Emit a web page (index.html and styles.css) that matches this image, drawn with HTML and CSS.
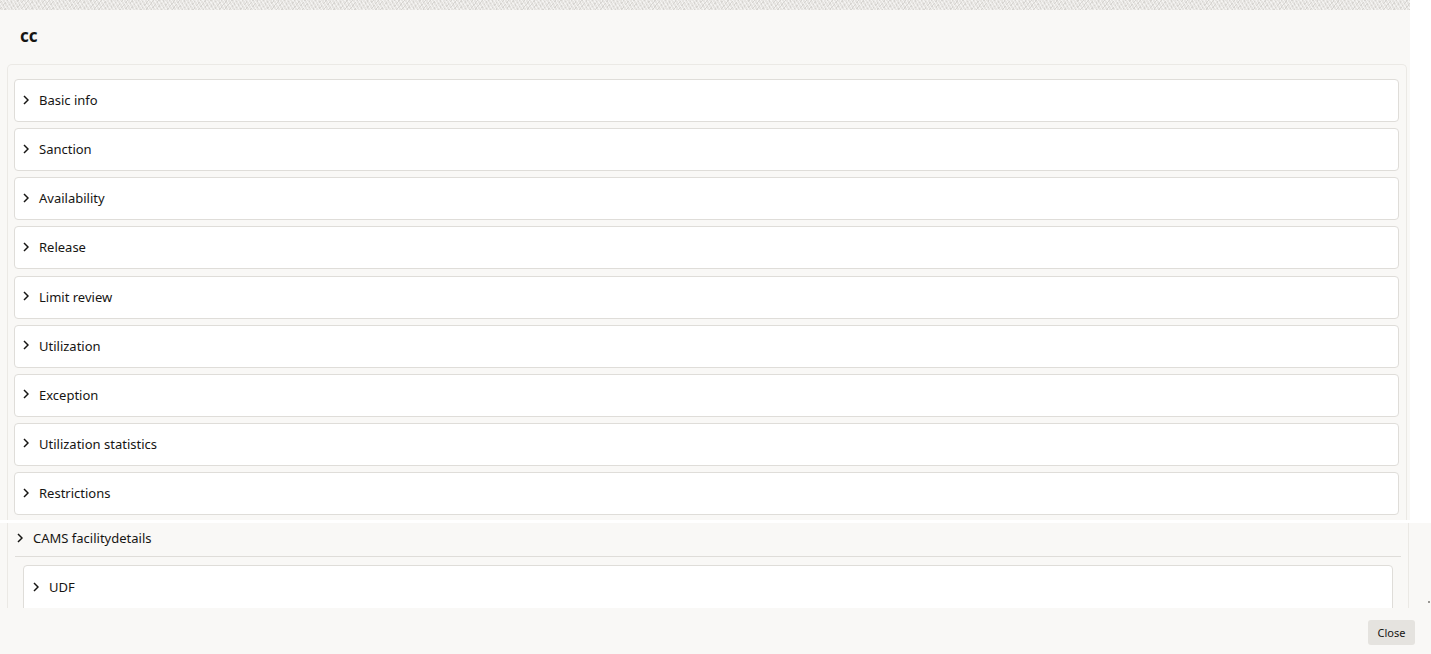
FILE: index.html
```html
<!DOCTYPE html>
<html lang="en">
<head>
<meta charset="utf-8">
<title>cc</title>
<link rel="stylesheet" href="styles.css">
</head>
<body>
<div class="topstrip"></div>
<div class="dialog">
  <div class="dialog-header"><h1 class="title">cc</h1></div>
  <div class="panel">
    <div class="card"><span class="chev"><svg viewBox="0 0 6 10" width="6" height="10"><path d="M1 1l4 4-4 4" fill="none" stroke="#161513" stroke-width="1.5"/></svg></span><span class="label">Basic info</span></div>
    <div class="card"><span class="chev"><svg viewBox="0 0 6 10" width="6" height="10"><path d="M1 1l4 4-4 4" fill="none" stroke="#161513" stroke-width="1.5"/></svg></span><span class="label">Sanction</span></div>
    <div class="card"><span class="chev"><svg viewBox="0 0 6 10" width="6" height="10"><path d="M1 1l4 4-4 4" fill="none" stroke="#161513" stroke-width="1.5"/></svg></span><span class="label">Availability</span></div>
    <div class="card"><span class="chev"><svg viewBox="0 0 6 10" width="6" height="10"><path d="M1 1l4 4-4 4" fill="none" stroke="#161513" stroke-width="1.5"/></svg></span><span class="label">Release</span></div>
    <div class="card"><span class="chev"><svg viewBox="0 0 6 10" width="6" height="10"><path d="M1 1l4 4-4 4" fill="none" stroke="#161513" stroke-width="1.5"/></svg></span><span class="label">Limit review</span></div>
    <div class="card"><span class="chev"><svg viewBox="0 0 6 10" width="6" height="10"><path d="M1 1l4 4-4 4" fill="none" stroke="#161513" stroke-width="1.5"/></svg></span><span class="label">Utilization</span></div>
    <div class="card"><span class="chev"><svg viewBox="0 0 6 10" width="6" height="10"><path d="M1 1l4 4-4 4" fill="none" stroke="#161513" stroke-width="1.5"/></svg></span><span class="label">Exception</span></div>
    <div class="card"><span class="chev"><svg viewBox="0 0 6 10" width="6" height="10"><path d="M1 1l4 4-4 4" fill="none" stroke="#161513" stroke-width="1.5"/></svg></span><span class="label">Utilization statistics</span></div>
    <div class="card"><span class="chev"><svg viewBox="0 0 6 10" width="6" height="10"><path d="M1 1l4 4-4 4" fill="none" stroke="#161513" stroke-width="1.5"/></svg></span><span class="label">Restrictions</span></div>
  </div>
</div>
<div class="gap"></div>
<div class="cams">
  <div class="cams-inner">
    <div class="cams-head"><span class="chev"><svg viewBox="0 0 6 10" width="6" height="10"><path d="M1 1l4 4-4 4" fill="none" stroke="#161513" stroke-width="1.5"/></svg></span><span class="label">CAMS facilitydetails</span></div>
    <div class="cams-body">
      <div class="card udf"><span class="chev"><svg viewBox="0 0 6 10" width="6" height="10"><path d="M1 1l4 4-4 4" fill="none" stroke="#161513" stroke-width="1.5"/></svg></span><span class="label">UDF</span></div>
    </div>
  </div>
  <span class="tick"></span>
</div>
<div class="footer"><button class="close-btn">Close</button></div>
</body>
</html>
```

FILE: styles.css
```css
html, body {
  margin: 0;
  padding: 0;
  background: #ffffff;
  font-family: "Noto Sans", "Liberation Sans", sans-serif;
  color: #161513;
  height: 654px;
  overflow: hidden;
}

.topstrip {
  width: 1410px;
  height: 10px;
  background-color: #e6e4e1;
  background-image:
    repeating-linear-gradient(60deg, rgba(255,255,255,0.55) 0 1px, transparent 1px 3px),
    repeating-linear-gradient(-50deg, rgba(200,198,194,0.5) 0 1px, transparent 1px 4px);
}

.dialog {
  width: 1410px;
  background: #f9f8f6;
  height: 510px;
  overflow: hidden;
}

.dialog-header {
  height: 54px;
  display: flex;
  align-items: center;
  padding-left: 20px;
}

.title {
  margin: 0;
  font-size: 17px;
  font-weight: 700;
  line-height: 1;
  position: relative;
  top: -2px;
}

.panel {
  margin-left: 7px;
  width: 1400px;
  box-sizing: border-box;
  border: 1px solid #ebe9e5;
  border-bottom: none;
  border-radius: 5px 5px 0 0;
  padding: 14px 7px 0 6px;
  display: flex;
  flex-direction: column;
  gap: 6.14px;
  height: 460px;
}

.card {
  height: 43px;
  box-sizing: border-box;
  background: #ffffff;
  border: 1px solid #dfddd9;
  border-radius: 4px;
  display: flex;
  align-items: center;
  padding-left: 8px;
  flex-shrink: 0;
}

.chev {
  width: 6px;
  height: 10px;
  display: flex;
  margin-right: 10px;
  position: relative;
  top: -1px;
}

.label {
  font-size: 13px;
  line-height: 1;
}

.gap {
  height: 3px;
  background: #ffffff;
}

.cams {
  height: 85px;
  background: #f9f8f6;
  position: relative;
}

.cams-inner {
  margin-left: 7px;
  width: 1402px;
  height: 85px;
  box-sizing: border-box;
  border-left: 1px solid #ebe9e5;
  border-right: 1px solid #ebe9e5;
  padding: 0 7px 0 7px;
  overflow: hidden;
}

.cams-head {
  height: 33px;
  border-bottom: 1px solid #dfddd9;
  display: flex;
  align-items: center;
  padding-left: 2px;
}

.cams-head .label {
  position: relative;
  top: -1px;
}

.cams-head .chev {
  margin-right: 10px;
  top: -2px;
}

.cams-body {
  padding: 8px 8px 0 8px;
}

.udf {
  height: 50px;
  padding-left: 9px;
  align-items: flex-start;
  padding-top: 15px;
}

.udf .chev {
  top: 1px;
}

.tick {
  position: absolute;
  left: 1428px;
  top: 78px;
  width: 2px;
  height: 2px;
  background: #9a9894;
}

.footer {
  height: 46px;
  background: #f9f8f6;
  display: flex;
  justify-content: flex-end;
  align-items: flex-start;
  padding-right: 16px;
  box-sizing: border-box;
  padding-top: 12px;
}

.close-btn {
  width: 47px;
  height: 25px;
  border: none;
  border-radius: 3px;
  background: #e5e3df;
  font-family: "Noto Sans", "Liberation Sans", sans-serif;
  font-size: 11px;
  color: #161513;
  padding: 0;
  cursor: pointer;
}
```
